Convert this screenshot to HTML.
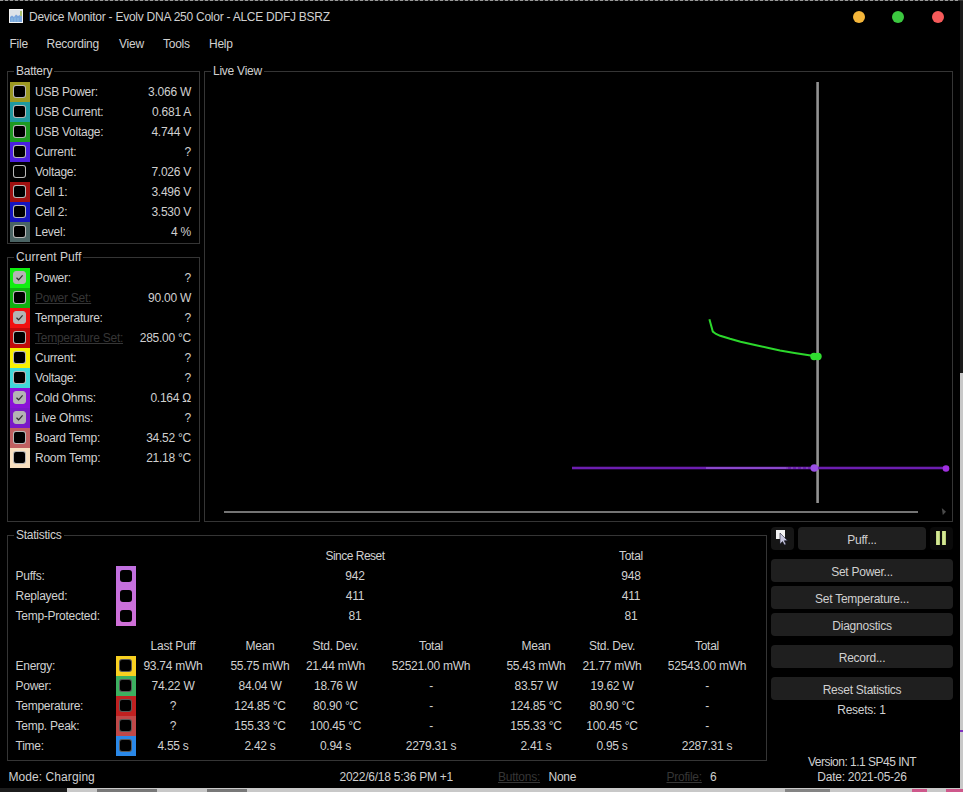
<!DOCTYPE html>
<html><head><meta charset="utf-8">
<style>
*{margin:0;padding:0;box-sizing:border-box}
html,body{width:963px;height:792px;overflow:hidden;background:#000}
body{position:relative;font-family:"Liberation Sans",sans-serif;font-size:12px;color:#d0d0d0}
.t{position:absolute;white-space:pre;line-height:1;letter-spacing:-0.25px}
.grp{position:absolute;border:1px solid #353535}
.gl{background:#000;padding:0 2px}
.sw{position:absolute;width:20px;height:20px}
.cb{position:absolute;width:13px;height:13px;border:1px solid rgba(255,255,255,0.72);border-radius:3px;background:#000}
.cb.k{background:#b4b4b4;border-color:#b4b4b4}
.cb.s{width:12px;height:12px;border:none;border-radius:3px}
.dis{color:#363636;text-decoration:underline}
.btn{position:absolute;background:#1f1f1f;border-radius:4px}
</style></head><body>
<div style="position:absolute;left:0;top:0;width:963px;height:1px;background:repeating-linear-gradient(90deg,#9a9a9a 0 3px,#303030 3px 5px)"></div>
<div style="position:absolute;left:960px;top:0;width:3px;height:373px;background:#1a1a1a"></div>
<div style="position:absolute;left:960px;top:373px;width:3px;height:419px;background:#c8c8c8"></div>
<div style="position:absolute;left:67px;top:788px;width:896px;height:4px;background:#c8c8c8"></div>
<div style="position:absolute;left:0;top:788px;width:67px;height:4px;background:#1c1c1c"></div>
<div style="position:absolute;left:97px;top:789px;width:60px;height:3px;background:#555;opacity:0.7"></div>
<div style="position:absolute;left:207px;top:789px;width:40px;height:3px;background:#555;opacity:0.7"></div>
<div style="position:absolute;left:785px;top:789px;width:45px;height:3px;background:#666;opacity:0.7"></div>
<div style="position:absolute;left:912px;top:789px;width:15px;height:3px;background:#d02870;opacity:0.7"></div>
<div style="position:absolute;left:946px;top:789px;width:17px;height:3px;background:#d02870;opacity:0.7"></div>
<div style="position:absolute;left:960px;top:730px;width:3px;height:2px;background:#8030c0"></div>
<div style="position:absolute;left:960px;top:0;width:3px;height:1px;background:#3a3a3a"></div>
<svg style="position:absolute;left:9px;top:9px" width="14" height="14">
<rect x="0.5" y="0.5" width="13" height="13" fill="#dde2e8" stroke="#f4f4f4" stroke-width="1"/>
<path d="M1 8 L3 6.5 L5 8 L7 5.5 L9 7 L11 6 L13 7 L13 13 L1 13 Z" fill="#78a4dc"/>
<path d="M3 13 L3 9 M6 13 L6 8.5 M9 13 L9 9" stroke="#8cc0e0" stroke-width="1"/>
<rect x="11" y="2" width="2" height="5" fill="#a8c070"/>
</svg>
<div class="t " style="left:29px;top:10.84px;color:#f0f0f0letter-spacing:-0.3px;">Device Monitor - Evolv DNA 250 Color - ALCE DDFJ BSRZ</div>
<div style="position:absolute;left:853px;top:11px;width:12px;height:12px;border-radius:50%;background:#f4b63a"></div>
<div style="position:absolute;left:892px;top:11px;width:12px;height:12px;border-radius:50%;background:#3cc840"></div>
<div style="position:absolute;left:932px;top:11px;width:12px;height:12px;border-radius:50%;background:#f65a5a"></div>
<div class="t " style="left:9.5px;top:37.84px;">File</div>
<div class="t " style="left:46.5px;top:37.84px;">Recording</div>
<div class="t " style="left:119px;top:37.84px;">View</div>
<div class="t " style="left:163px;top:37.84px;">Tools</div>
<div class="t " style="left:209px;top:37.84px;">Help</div>
<div class="grp" style="left:7px;top:71px;width:193px;height:173px"></div>
<div class="t gl" style="left:14px;top:64.84px;">Battery</div>
<div class="sw" style="left:10px;top:82px;background:#9c9a22"></div>
<div class="cb" style="left:13px;top:85px"></div>
<div class="t " style="left:35px;top:85.84px;">USB Power:</div>
<div class="t " style="right:772px;top:85.84px;">3.066 W</div>
<div class="sw" style="left:10px;top:102px;background:#1f9aa0"></div>
<div class="cb" style="left:13px;top:105px"></div>
<div class="t " style="left:35px;top:105.84px;">USB Current:</div>
<div class="t " style="right:772px;top:105.84px;">0.681 A</div>
<div class="sw" style="left:10px;top:122px;background:#1e9a20"></div>
<div class="cb" style="left:13px;top:125px"></div>
<div class="t " style="left:35px;top:125.84px;">USB Voltage:</div>
<div class="t " style="right:772px;top:125.84px;">4.744 V</div>
<div class="sw" style="left:10px;top:142px;background:#4a1ee0"></div>
<div class="cb" style="left:13px;top:145px"></div>
<div class="t " style="left:35px;top:145.84px;">Current:</div>
<div class="t " style="right:772px;top:145.84px;">?</div>
<div class="sw" style="left:10px;top:162px;background:#000"></div>
<div class="cb" style="left:13px;top:165px"></div>
<div class="t " style="left:35px;top:165.84px;">Voltage:</div>
<div class="t " style="right:772px;top:165.84px;">7.026 V</div>
<div class="sw" style="left:10px;top:182px;background:#a01010"></div>
<div class="cb" style="left:13px;top:185px"></div>
<div class="t " style="left:35px;top:185.84px;">Cell 1:</div>
<div class="t " style="right:772px;top:185.84px;">3.496 V</div>
<div class="sw" style="left:10px;top:202px;background:#1414c0"></div>
<div class="cb" style="left:13px;top:205px"></div>
<div class="t " style="left:35px;top:205.84px;">Cell 2:</div>
<div class="t " style="right:772px;top:205.84px;">3.530 V</div>
<div class="sw" style="left:10px;top:222px;background:#4a6464"></div>
<div class="cb" style="left:13px;top:225px"></div>
<div class="t " style="left:35px;top:225.84px;">Level:</div>
<div class="t " style="right:772px;top:225.84px;">4 %</div>
<div class="grp" style="left:7px;top:257px;width:193px;height:265px"></div>
<div class="t gl" style="left:14px;top:250.84px;letter-spacing:0.08px;">Current Puff</div>
<div class="sw" style="left:10px;top:268px;background:#10ee10"></div>
<div class="cb k" style="left:13px;top:271px"></div>
<svg style="position:absolute;left:13px;top:271px" width="13" height="13"><path d="M3.5 6.8 L5.6 8.8 L9.6 4.3" fill="none" stroke="#303030" stroke-width="1.2"/></svg>
<div class="t " style="left:35px;top:271.84px;">Power:</div>
<div class="t " style="right:772px;top:271.84px;">?</div>
<div class="sw" style="left:10px;top:288px;background:#10b010"></div>
<div class="cb" style="left:13px;top:291px"></div>
<div class="t dis" style="left:35px;top:291.84px;">Power Set:</div>
<div class="t " style="right:772px;top:291.84px;">90.00 W</div>
<div class="sw" style="left:10px;top:308px;background:#f01010"></div>
<div class="cb k" style="left:13px;top:311px"></div>
<svg style="position:absolute;left:13px;top:311px" width="13" height="13"><path d="M3.5 6.8 L5.6 8.8 L9.6 4.3" fill="none" stroke="#303030" stroke-width="1.2"/></svg>
<div class="t " style="left:35px;top:311.84px;">Temperature:</div>
<div class="t " style="right:772px;top:311.84px;">?</div>
<div class="sw" style="left:10px;top:328px;background:#c00a0a"></div>
<div class="cb" style="left:13px;top:331px"></div>
<div class="t dis" style="left:35px;top:331.84px;">Temperature Set:</div>
<div class="t " style="right:772px;top:331.84px;">285.00 °C</div>
<div class="sw" style="left:10px;top:348px;background:#f8f000"></div>
<div class="cb" style="left:13px;top:351px"></div>
<div class="t " style="left:35px;top:351.84px;">Current:</div>
<div class="t " style="right:772px;top:351.84px;">?</div>
<div class="sw" style="left:10px;top:368px;background:#40d8d8"></div>
<div class="cb" style="left:13px;top:371px"></div>
<div class="t " style="left:35px;top:371.84px;">Voltage:</div>
<div class="t " style="right:772px;top:371.84px;">?</div>
<div class="sw" style="left:10px;top:388px;background:#8a10d8"></div>
<div class="cb k" style="left:13px;top:391px"></div>
<svg style="position:absolute;left:13px;top:391px" width="13" height="13"><path d="M3.5 6.8 L5.6 8.8 L9.6 4.3" fill="none" stroke="#303030" stroke-width="1.2"/></svg>
<div class="t " style="left:35px;top:391.84px;">Cold Ohms:</div>
<div class="t " style="right:772px;top:391.84px;">0.164 Ω</div>
<div class="sw" style="left:10px;top:408px;background:#7a18c8"></div>
<div class="cb k" style="left:13px;top:411px"></div>
<svg style="position:absolute;left:13px;top:411px" width="13" height="13"><path d="M3.5 6.8 L5.6 8.8 L9.6 4.3" fill="none" stroke="#303030" stroke-width="1.2"/></svg>
<div class="t " style="left:35px;top:411.84px;">Live Ohms:</div>
<div class="t " style="right:772px;top:411.84px;">?</div>
<div class="sw" style="left:10px;top:428px;background:#c06060"></div>
<div class="cb" style="left:13px;top:431px"></div>
<div class="t " style="left:35px;top:431.84px;">Board Temp:</div>
<div class="t " style="right:772px;top:431.84px;">34.52 °C</div>
<div class="sw" style="left:10px;top:448px;background:#f8e0c0"></div>
<div class="cb" style="left:13px;top:451px"></div>
<div class="t " style="left:35px;top:451.84px;">Room Temp:</div>
<div class="t " style="right:772px;top:451.84px;">21.18 °C</div>
<div class="grp" style="left:204px;top:71px;width:749px;height:451px"></div>
<div class="t gl" style="left:211px;top:64.84px;">Live View</div>
<svg style="position:absolute;left:0;top:0" width="963" height="792">
<line x1="817.6" y1="82" x2="817.6" y2="503" stroke="#929292" stroke-width="2.6"/>
<polyline points="709.4,319.2 712.8,331.6 716,334 720.2,335.8 730,338.8 740.5,341.7 755,345 767.5,347.8 780,350.5 794.5,352.9 810.7,355.6 815,356.5" fill="none" stroke="#2cd82c" stroke-width="2"/>
<circle cx="814" cy="356.5" r="3.7" fill="#30dc30"/>
<circle cx="818" cy="356.5" r="3.7" fill="#30dc30"/>
<line x1="572" y1="468" x2="946" y2="468" stroke="#5a1890" stroke-width="4" stroke-opacity="0.35"/>
<line x1="572" y1="468" x2="706" y2="468" stroke="#6c1eb0" stroke-width="2"/>
<line x1="706" y1="468" x2="786" y2="468" stroke="#8a48cc" stroke-width="2"/>
<line x1="786" y1="468" x2="946" y2="468" stroke="#6c1eb0" stroke-width="2"/>
<line x1="786" y1="468" x2="808" y2="468" stroke="#a890c8" stroke-width="1" stroke-dasharray="2 3" stroke-opacity="0.6"/>
<circle cx="814.3" cy="468" r="3.8" fill="#9a50e4"/>
<circle cx="946" cy="468.5" r="3.3" fill="#a030e0"/>
<line x1="224" y1="512" x2="918" y2="512" stroke="#747474" stroke-width="2"/>
<path d="M941.8 508 L946 511.8 L942.8 515 Z" fill="#4a4a4a"/>
</svg>
<div class="grp" style="left:7px;top:535px;width:760px;height:226px"></div>
<div class="t gl" style="left:14px;top:528.84px;">Statistics</div>
<div class="t " style="left:255.0px;width:200px;text-align:center;top:549.84px;letter-spacing:-0.5px;">Since Reset</div>
<div class="t " style="left:531.0px;width:200px;text-align:center;top:549.84px;">Total</div>
<div class="sw" style="left:116px;top:566px;height:60px;background:linear-gradient(#c070e0,#d070d8)"></div>
<div class="cb s" style="left:120px;top:570px"></div>
<div class="t " style="left:15.5px;top:569.84px;">Puffs:</div>
<div class="t " style="left:255.0px;width:200px;text-align:center;top:569.84px;">942</div>
<div class="t " style="left:531.0px;width:200px;text-align:center;top:569.84px;">948</div>
<div class="cb s" style="left:120px;top:590px"></div>
<div class="t " style="left:15.5px;top:589.84px;">Replayed:</div>
<div class="t " style="left:255.0px;width:200px;text-align:center;top:589.84px;">411</div>
<div class="t " style="left:531.0px;width:200px;text-align:center;top:589.84px;">411</div>
<div class="cb s" style="left:120px;top:610px"></div>
<div class="t " style="left:15.5px;top:609.84px;">Temp-Protected:</div>
<div class="t " style="left:255.0px;width:200px;text-align:center;top:609.84px;">81</div>
<div class="t " style="left:531.0px;width:200px;text-align:center;top:609.84px;">81</div>
<div class="t " style="left:73.0px;width:200px;text-align:center;top:639.84px;">Last Puff</div>
<div class="t " style="left:160.0px;width:200px;text-align:center;top:639.84px;">Mean</div>
<div class="t " style="left:235.5px;width:200px;text-align:center;top:639.84px;">Std. Dev.</div>
<div class="t " style="left:331.0px;width:200px;text-align:center;top:639.84px;">Total</div>
<div class="t " style="left:436.0px;width:200px;text-align:center;top:639.84px;">Mean</div>
<div class="t " style="left:512.0px;width:200px;text-align:center;top:639.84px;">Std. Dev.</div>
<div class="t " style="left:607.0px;width:200px;text-align:center;top:639.84px;">Total</div>
<div class="sw" style="left:116px;top:656px;background:#f8d020"></div>
<div class="cb" style="left:119px;top:659px;border-color:rgba(255,255,255,0.35)"></div>
<div class="t " style="left:15.5px;top:659.84px;">Energy:</div>
<div class="t " style="left:73.0px;width:200px;text-align:center;top:659.84px;">93.74 mWh</div>
<div class="t " style="left:160.0px;width:200px;text-align:center;top:659.84px;">55.75 mWh</div>
<div class="t " style="left:235.5px;width:200px;text-align:center;top:659.84px;">21.44 mWh</div>
<div class="t " style="left:331.0px;width:200px;text-align:center;top:659.84px;">52521.00 mWh</div>
<div class="t " style="left:436.0px;width:200px;text-align:center;top:659.84px;">55.43 mWh</div>
<div class="t " style="left:512.0px;width:200px;text-align:center;top:659.84px;">21.77 mWh</div>
<div class="t " style="left:607.0px;width:200px;text-align:center;top:659.84px;">52543.00 mWh</div>
<div class="sw" style="left:116px;top:676px;background:#3cb060"></div>
<div class="cb" style="left:119px;top:679px;border-color:rgba(255,255,255,0.35)"></div>
<div class="t " style="left:15.5px;top:679.84px;">Power:</div>
<div class="t " style="left:73.0px;width:200px;text-align:center;top:679.84px;">74.22 W</div>
<div class="t " style="left:160.0px;width:200px;text-align:center;top:679.84px;">84.04 W</div>
<div class="t " style="left:235.5px;width:200px;text-align:center;top:679.84px;">18.76 W</div>
<div class="t " style="left:331.0px;width:200px;text-align:center;top:679.84px;">-</div>
<div class="t " style="left:436.0px;width:200px;text-align:center;top:679.84px;">83.57 W</div>
<div class="t " style="left:512.0px;width:200px;text-align:center;top:679.84px;">19.62 W</div>
<div class="t " style="left:607.0px;width:200px;text-align:center;top:679.84px;">-</div>
<div class="sw" style="left:116px;top:696px;background:#c02020"></div>
<div class="cb" style="left:119px;top:699px;border-color:rgba(255,255,255,0.35)"></div>
<div class="t " style="left:15.5px;top:699.84px;">Temperature:</div>
<div class="t " style="left:73.0px;width:200px;text-align:center;top:699.84px;">?</div>
<div class="t " style="left:160.0px;width:200px;text-align:center;top:699.84px;">124.85 °C</div>
<div class="t " style="left:235.5px;width:200px;text-align:center;top:699.84px;">80.90 °C</div>
<div class="t " style="left:331.0px;width:200px;text-align:center;top:699.84px;">-</div>
<div class="t " style="left:436.0px;width:200px;text-align:center;top:699.84px;">124.85 °C</div>
<div class="t " style="left:512.0px;width:200px;text-align:center;top:699.84px;">80.90 °C</div>
<div class="t " style="left:607.0px;width:200px;text-align:center;top:699.84px;">-</div>
<div class="sw" style="left:116px;top:716px;background:#c04848"></div>
<div class="cb" style="left:119px;top:719px;border-color:rgba(255,255,255,0.35)"></div>
<div class="t " style="left:15.5px;top:719.84px;">Temp. Peak:</div>
<div class="t " style="left:73.0px;width:200px;text-align:center;top:719.84px;">?</div>
<div class="t " style="left:160.0px;width:200px;text-align:center;top:719.84px;">155.33 °C</div>
<div class="t " style="left:235.5px;width:200px;text-align:center;top:719.84px;">100.45 °C</div>
<div class="t " style="left:331.0px;width:200px;text-align:center;top:719.84px;">-</div>
<div class="t " style="left:436.0px;width:200px;text-align:center;top:719.84px;">155.33 °C</div>
<div class="t " style="left:512.0px;width:200px;text-align:center;top:719.84px;">100.45 °C</div>
<div class="t " style="left:607.0px;width:200px;text-align:center;top:719.84px;">-</div>
<div class="sw" style="left:116px;top:736px;background:#2a88e8"></div>
<div class="cb" style="left:119px;top:739px;border-color:rgba(255,255,255,0.35)"></div>
<div class="t " style="left:15.5px;top:739.84px;">Time:</div>
<div class="t " style="left:73.0px;width:200px;text-align:center;top:739.84px;">4.55 s</div>
<div class="t " style="left:160.0px;width:200px;text-align:center;top:739.84px;">2.42 s</div>
<div class="t " style="left:235.5px;width:200px;text-align:center;top:739.84px;">0.94 s</div>
<div class="t " style="left:331.0px;width:200px;text-align:center;top:739.84px;">2279.31 s</div>
<div class="t " style="left:436.0px;width:200px;text-align:center;top:739.84px;">2.41 s</div>
<div class="t " style="left:512.0px;width:200px;text-align:center;top:739.84px;">0.95 s</div>
<div class="t " style="left:607.0px;width:200px;text-align:center;top:739.84px;">2287.31 s</div>
<div class="btn" style="left:771px;top:527px;width:23px;height:23px;background:#161616"></div>
<svg style="position:absolute;left:771px;top:527px" width="23" height="22">
<rect x="5" y="3" width="9" height="9" fill="#f4f4f4"/>
<path d="M9 6 L9 17 L11.5 14.5 L13.5 18 L15 17.2 L13.2 13.8 L16.5 13.5 Z" fill="#c8c8e0" stroke="#202030" stroke-width="0.6"/>
</svg>
<div class="btn" style="left:798px;top:527px;width:128px;height:23px"></div>
<div class="t " style="left:798.0px;width:128px;text-align:center;top:533.84px;">Puff...</div>
<div class="btn" style="left:930px;top:527px;width:23px;height:23px;background:#0a0a0a"></div>
<div style="position:absolute;left:936px;top:531px;width:4px;height:14px;background:linear-gradient(90deg,#b8d078,#e0f0a0,#a8c068)"></div>
<div style="position:absolute;left:942px;top:531px;width:4px;height:14px;background:linear-gradient(90deg,#b8d078,#e0f0a0,#a8c068)"></div>
<div class="btn" style="left:771px;top:559px;width:182px;height:23px"></div>
<div class="t " style="left:771.0px;width:182px;text-align:center;top:565.84px;">Set Power...</div>
<div class="btn" style="left:771px;top:586px;width:182px;height:23px"></div>
<div class="t " style="left:771.0px;width:182px;text-align:center;top:592.84px;">Set Temperature...</div>
<div class="btn" style="left:771px;top:613px;width:182px;height:23px"></div>
<div class="t " style="left:771.0px;width:182px;text-align:center;top:619.84px;">Diagnostics</div>
<div class="btn" style="left:771px;top:645px;width:182px;height:23px"></div>
<div class="t " style="left:771.0px;width:182px;text-align:center;top:651.84px;">Record...</div>
<div class="btn" style="left:771px;top:677px;width:182px;height:23px"></div>
<div class="t " style="left:771.0px;width:182px;text-align:center;top:683.84px;">Reset Statistics</div>
<div class="t " style="left:761.5px;width:200px;text-align:center;top:703.84px;">Resets: 1</div>
<div class="t " style="left:762.0px;width:200px;text-align:center;top:755.84px;letter-spacing:-0.5px;">Version: 1.1 SP45 INT</div>
<div class="t " style="left:762.0px;width:200px;text-align:center;top:770.84px;">Date: 2021-05-26</div>
<div class="t " style="left:8.5px;top:770.84px;letter-spacing:0.07px;">Mode: Charging</div>
<div class="t " style="left:339.5px;top:770.84px;">2022/6/18 5:36 PM +1</div>
<div class="t dis" style="left:498px;top:770.84px;">Buttons:</div>
<div class="t " style="left:548.5px;top:770.84px;">None</div>
<div class="t dis" style="left:666.5px;top:770.84px;">Profile:</div>
<div class="t " style="left:710px;top:770.84px;">6</div>
</body></html>
